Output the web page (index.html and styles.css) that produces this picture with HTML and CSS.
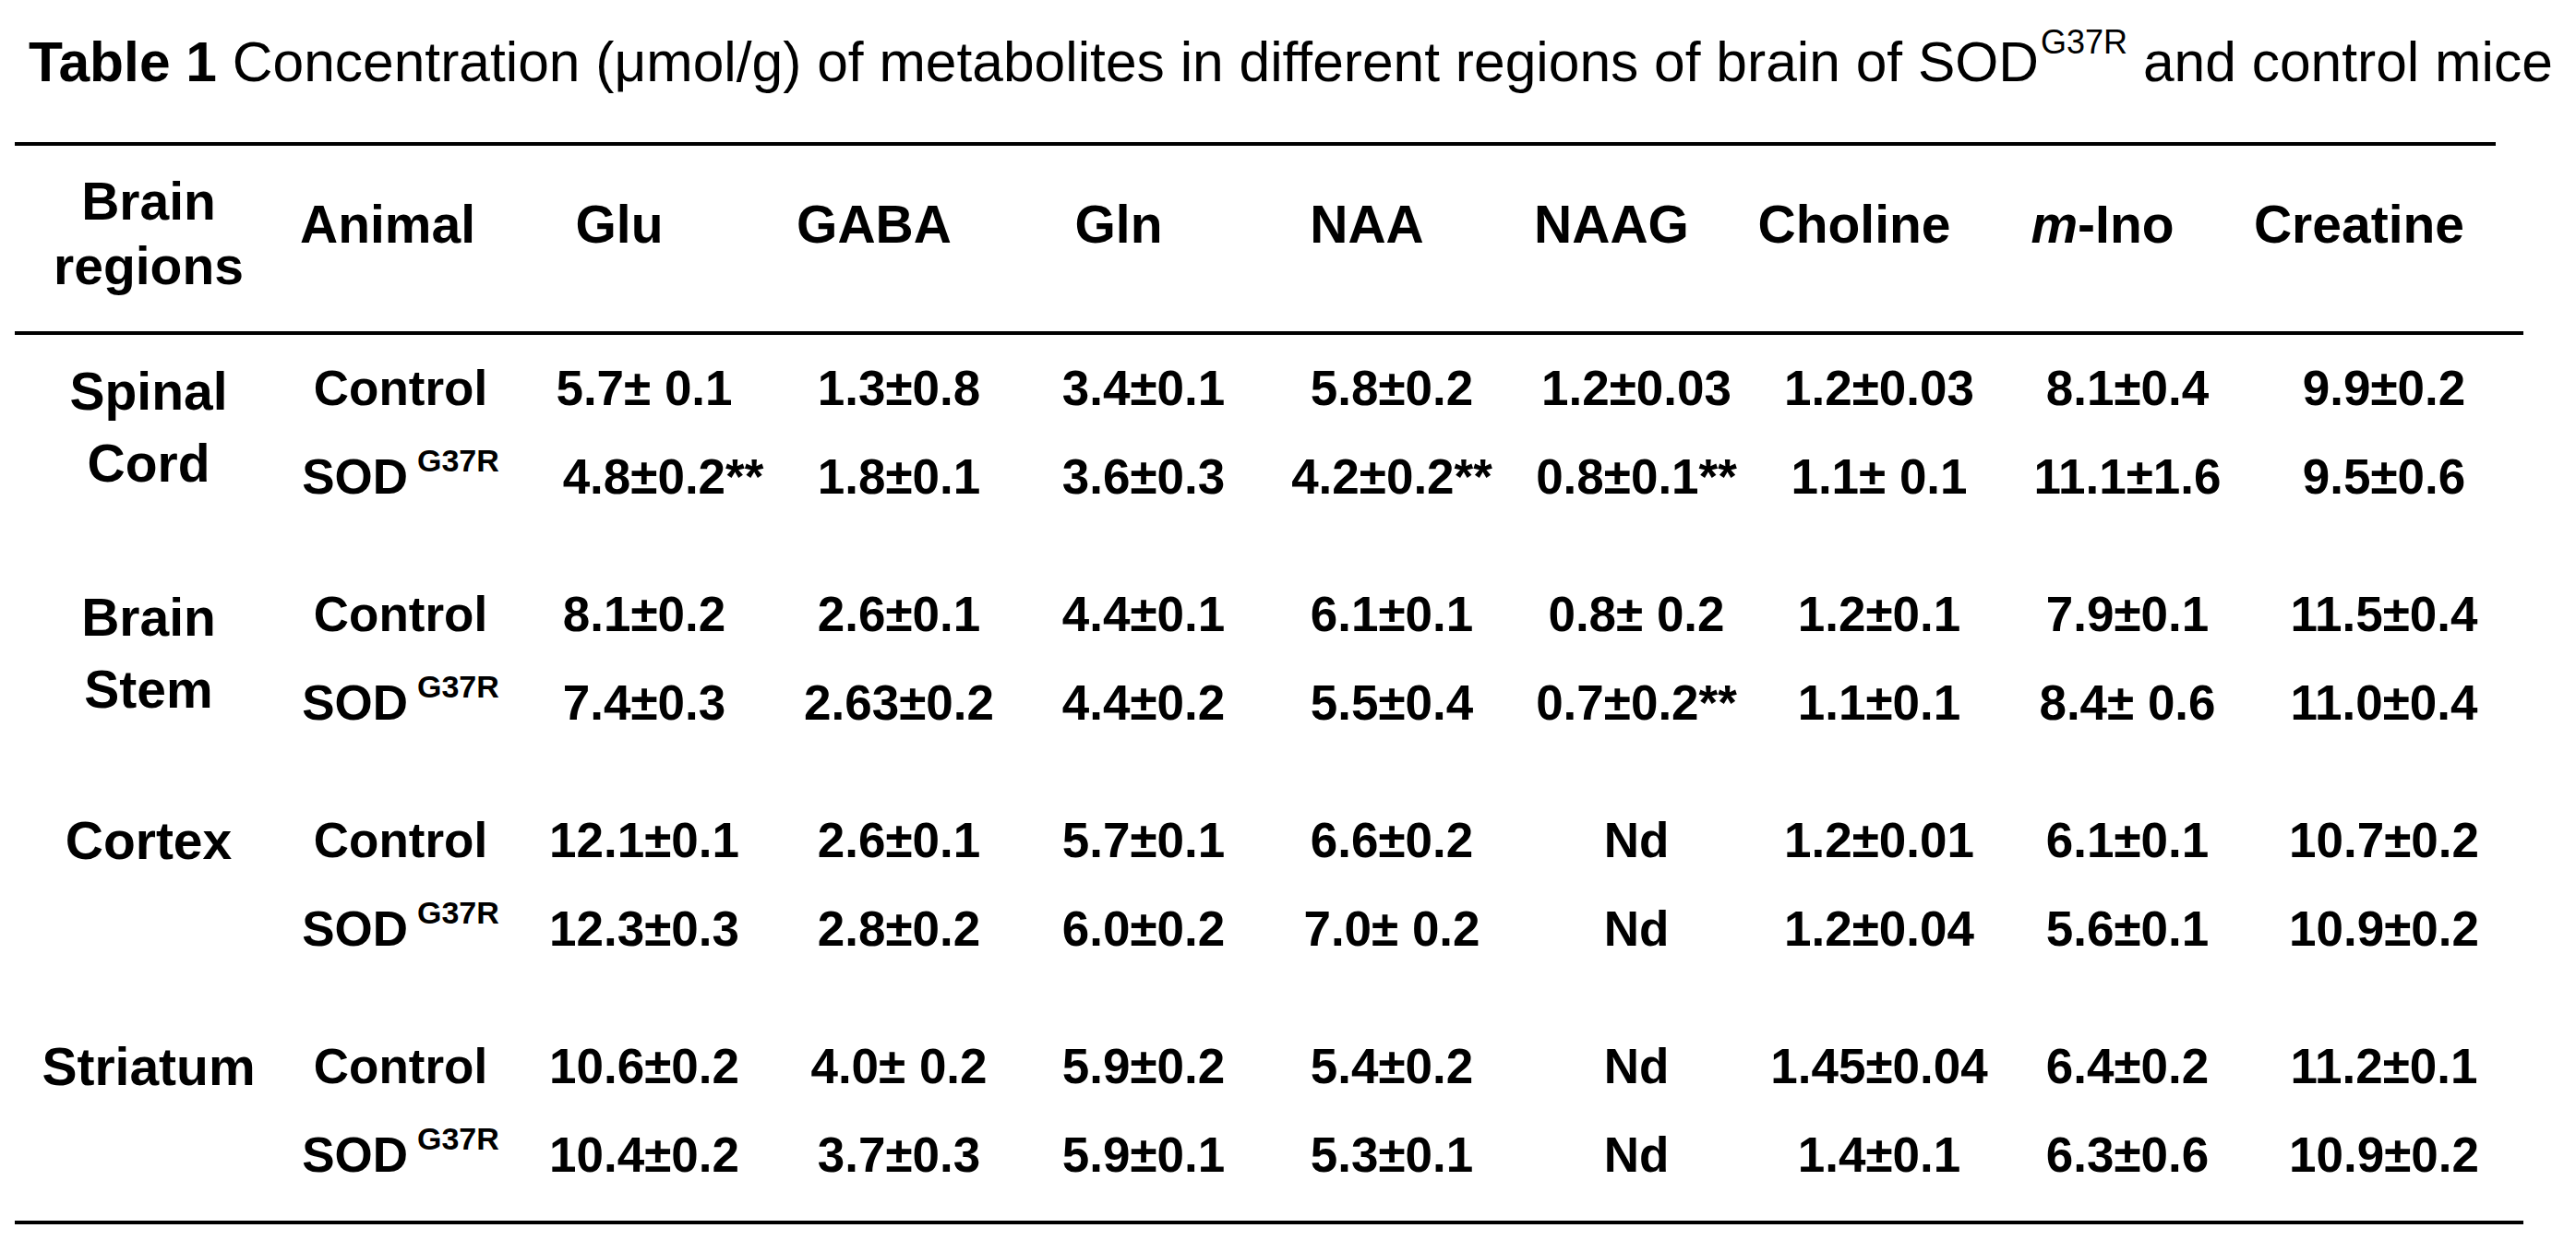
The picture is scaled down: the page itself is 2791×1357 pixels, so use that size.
FILE: index.html
```html
<!DOCTYPE html>
<html lang="en">
<head>
<meta charset="utf-8">
<title>Table 1</title>
<link rel="stylesheet" href="styles.css">
</head>
<body>
<div class="page">
  <h1 class="title"><b>Table 1</b> Concentration (μmol/g) of metabolites in different regions of brain of SOD<sup class="tsup">G37R</sup> and control mice</h1>
  <div class="rule rule-top"></div>
  <div class="table">
    <div class="thead grid">
      <div class="hcell hregion">Brain<br>regions</div>
      <div class="hcell hanimal">Animal</div>
      <div class="hcell hval">Glu</div>
      <div class="hcell hval">GABA</div>
      <div class="hcell hval">Gln</div>
      <div class="hcell hval">NAA</div>
      <div class="hcell hval">NAAG</div>
      <div class="hcell hval">Choline</div>
      <div class="hcell hval"><i>m</i>-Ino</div>
      <div class="hcell hval">Creatine</div>
    </div>
    <div class="rule"></div>
    <div class="tbody">
      <div class="group grid">
        <div class="region two">Spinal<br>Cord</div>
        <div class="cell">Control</div>
        <div class="cell">5.7± 0.1</div>
        <div class="cell">1.3±0.8</div>
        <div class="cell">3.4±0.1</div>
        <div class="cell">5.8±0.2</div>
        <div class="cell">1.2±0.03</div>
        <div class="cell">1.2±0.03</div>
        <div class="cell">8.1±0.4</div>
        <div class="cell">9.9±0.2</div>
        <div class="cell">SOD<sup class="rsup">G37R</sup></div>
        <div class="cell">4.8±0.2<span class="hang">**</span></div>
        <div class="cell">1.8±0.1</div>
        <div class="cell">3.6±0.3</div>
        <div class="cell">4.2±0.2**</div>
        <div class="cell">0.8±0.1**</div>
        <div class="cell">1.1± 0.1</div>
        <div class="cell">11.1±1.6</div>
        <div class="cell">9.5±0.6</div>
      </div>
      <div class="group grid">
        <div class="region two">Brain<br>Stem</div>
        <div class="cell">Control</div>
        <div class="cell">8.1±0.2</div>
        <div class="cell">2.6±0.1</div>
        <div class="cell">4.4±0.1</div>
        <div class="cell">6.1±0.1</div>
        <div class="cell">0.8± 0.2</div>
        <div class="cell">1.2±0.1</div>
        <div class="cell">7.9±0.1</div>
        <div class="cell">11.5±0.4</div>
        <div class="cell">SOD<sup class="rsup">G37R</sup></div>
        <div class="cell">7.4±0.3</div>
        <div class="cell">2.63±0.2</div>
        <div class="cell">4.4±0.2</div>
        <div class="cell">5.5±0.4</div>
        <div class="cell">0.7±0.2**</div>
        <div class="cell">1.1±0.1</div>
        <div class="cell">8.4± 0.6</div>
        <div class="cell">11.0±0.4</div>
      </div>
      <div class="group grid">
        <div class="region one">Cortex</div>
        <div class="cell">Control</div>
        <div class="cell">12.1±0.1</div>
        <div class="cell">2.6±0.1</div>
        <div class="cell">5.7±0.1</div>
        <div class="cell">6.6±0.2</div>
        <div class="cell">Nd</div>
        <div class="cell">1.2±0.01</div>
        <div class="cell">6.1±0.1</div>
        <div class="cell">10.7±0.2</div>
        <div class="cell">SOD<sup class="rsup">G37R</sup></div>
        <div class="cell">12.3±0.3</div>
        <div class="cell">2.8±0.2</div>
        <div class="cell">6.0±0.2</div>
        <div class="cell">7.0± 0.2</div>
        <div class="cell">Nd</div>
        <div class="cell">1.2±0.04</div>
        <div class="cell">5.6±0.1</div>
        <div class="cell">10.9±0.2</div>
      </div>
      <div class="group grid">
        <div class="region one">Striatum</div>
        <div class="cell">Control</div>
        <div class="cell">10.6±0.2</div>
        <div class="cell">4.0± 0.2</div>
        <div class="cell">5.9±0.2</div>
        <div class="cell">5.4±0.2</div>
        <div class="cell">Nd</div>
        <div class="cell">1.45±0.04</div>
        <div class="cell">6.4±0.2</div>
        <div class="cell">11.2±0.1</div>
        <div class="cell">SOD<sup class="rsup">G37R</sup></div>
        <div class="cell">10.4±0.2</div>
        <div class="cell">3.7±0.3</div>
        <div class="cell">5.9±0.1</div>
        <div class="cell">5.3±0.1</div>
        <div class="cell">Nd</div>
        <div class="cell">1.4±0.1</div>
        <div class="cell">6.3±0.6</div>
        <div class="cell">10.9±0.2</div>
      </div>
    </div>
    <div class="rule"></div>
  </div>
</div>
</body>
</html>
```

FILE: styles.css
```css
html, body {
  margin: 0;
  padding: 0;
  background: #ffffff;
}

body {
  font-family: "Liberation Sans", Arial, Helvetica, sans-serif;
  color: #000000;
}

.page {
  width: 2791px;
}

.title {
  margin: 0;
  padding: 37px 0 0 31px;
  font-size: 60.5px;
  line-height: 60px;
  font-weight: normal;
  white-space: nowrap;
}

.title b {
  font-weight: bold;
}

.tsup {
  font-size: 36px;
  line-height: 0;
  vertical-align: 30px;
  margin-left: 2px;
}

.rule {
  height: 4px;
  background: #000000;
}

.rule-top {
  margin: 57px 0 0 16px;
  width: 2688px;
}

.table {
  margin-left: 16px;
  width: 2718px;
}

.grid {
  display: grid;
  grid-template-columns: 290px 256px 272px 280px 250px 288px 242px 284px 254px 302px;
}

.thead {
  height: 201px;
  font-weight: bold;
  font-size: 57px;
  line-height: 70px;
  text-align: center;
}

.hcell {
  padding-top: 50px;
  white-space: nowrap;
}

.hregion {
  padding-top: 25px;
}

.hanimal {
  padding-right: 28px;
}

.hval {
  padding-right: 54px;
}

.tbody {
  display: flex;
  flex-direction: column;
  gap: 53px;
  padding: 10px 0 23px;
}

.group {
  grid-template-rows: 96px 96px;
  font-weight: bold;
  font-size: 53px;
  line-height: 96px;
  text-align: center;
}

.cell {
  white-space: nowrap;
}

.region {
  grid-row: 1 / span 2;
  grid-column: 1;
  align-self: start;
  font-size: 57px;
  line-height: 78px;
}

.region.two {
  padding-top: 12px;
}

.region.one {
  padding-top: 9px;
}

.rsup {
  font-size: 34px;
  line-height: 0;
  vertical-align: 24px;
  margin-left: 10px;
}

.hang {
  margin-right: -41px;
}
```
